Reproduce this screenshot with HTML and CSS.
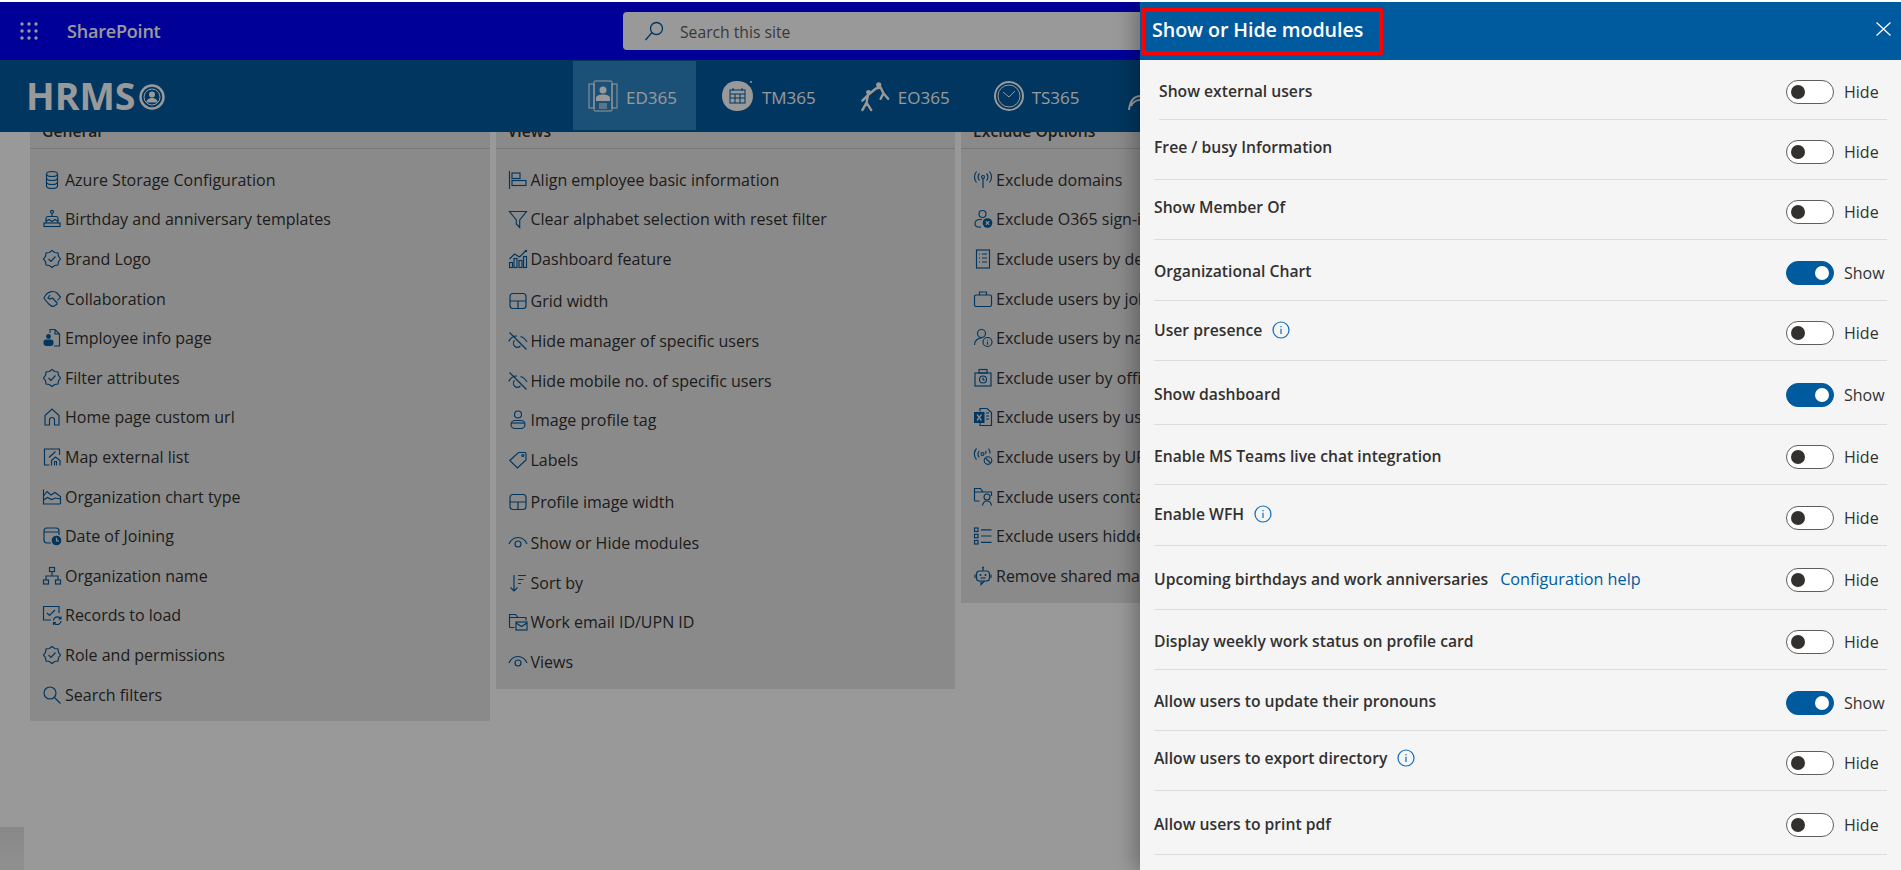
FILE: index.html
```html
<!DOCTYPE html>
<html lang="en">
<head>
<meta charset="utf-8">
<title>Show or Hide modules</title>
<link rel="stylesheet" href="styles.css">
</head>
<body>
<svg class="defs" aria-hidden="true">
  <symbol id="i-db" viewBox="0 0 20 20"><ellipse cx="10" cy="4" rx="5.5" ry="2.5"/><path d="M4.5 4v12c0 1.4 2.5 2.5 5.5 2.5s5.500-1.100 5.500-2.500V4M4.500 8c0 1.400 2.500 2.500 5.500 2.500s5.500-1.100 5.500-2.500M4.500 12c0 1.400 2.500 2.500 5.500 2.500s5.500-1.100 5.500-2.500"/></symbol>
  <symbol id="i-cake" viewBox="0 0 20 20"><circle cx="10" cy="2.800" r="1.500"/><path d="M10 4.500v2.500M4 14V9.500a2 2 0 0 1 2-2h8a2 2 0 0 1 2 2V14M4 12.500l3-2 3 2 3-2 3 2"/><rect x="2" y="14" width="16" height="3.500"/></symbol>
  <symbol id="i-badge" viewBox="0 0 20 20"><polygon points="10,1.500 12.700,3.500 16,4 16.500,7.300 18.500,10 16.500,12.700 16,16 12.700,16.500 10,18.500 7.300,16.500 4,16 3.500,12.700 1.500,10 3.500,7.300 4,4 7.300,3.500"/><path d="M6.500 10l2.500 2.500 4.500-5"/></symbol>
  <symbol id="i-hands" viewBox="0 0 20 20"><path d="M3 7c2-4 8-6 12-3l3.500 4-3 3.500M1.800 9l5 6c1 1 2.500 2.500 4.500 2.500l4-2.500M8 6L6 9l2 1 2.500-1 5 5.500M1.800 9L3 7"/></symbol>
  <symbol id="i-empdoc" viewBox="0 0 20 20"><path d="M8 5V1.500h5l4.500 4.500v12H12M13 1.500V6h4.500"/><circle class="f" cx="6.500" cy="8.500" r="2.400"/><path class="f" d="M1.500 14a2.500 2.500 0 0 1 2.500-2.500h5a2.500 2.500 0 0 1 2.500 2.500v1a3 3 0 0 1-3 3h-4a3 3 0 0 1-3-3z"/></symbol>
  <symbol id="i-home" viewBox="0 0 20 20"><path d="M3 18V8.500L10 2l7 6.500V18h-4.500v-5a2.500 2.500 0 0 0-5 0v5z"/></symbol>
  <symbol id="i-mapext" viewBox="0 0 20 20"><path d="M17.500 8V2H2.500v16h5M9.500 18.500v-5l4-3.500 4.500 3.500v5M12.500 18.500v-4h2v4M7 10.500l6.500-6"/></symbol>
  <symbol id="i-area" viewBox="0 0 20 20"><path d="M1.500 2.500v14.500h17M1.500 9L5 4.500l4 3.500 4-2.500 5.500 4V17M1.500 13l4-2.500 4 2 4-1.500 5 1"/></symbol>
  <symbol id="i-calclock" viewBox="0 0 20 20"><path d="M9 17H5a3 3 0 0 1-3-3V5a3 3 0 0 1 3-3h9a3 3 0 0 1 3 3v4M2 6h15"/><circle class="f" cx="14.500" cy="14.500" r="4.800"/><path class="w" d="M14.500 11.800v3h2.500"/></symbol>
  <symbol id="i-org" viewBox="0 0 20 20"><rect x="7.500" y="1.500" width="5" height="4"/><rect x="1.500" y="14" width="5" height="4"/><rect x="13.500" y="14" width="5" height="4"/><path d="M10 5.500v4.500M4 14v-4h12v4"/></symbol>
  <symbol id="i-checksync" viewBox="0 0 20 20"><path d="M17 8V1.500H1.500V15H9M5 8l2.500 2.500L13 5M11.500 15.500a3.800 3.800 0 0 1 6.500-2.500l1 1M19 16a3.800 3.800 0 0 1-6.500 2.500l-1-1M19 11.500V14h-2.500M11.500 20v-2.500H14"/></symbol>
  <symbol id="i-search" viewBox="0 0 20 20"><circle cx="8" cy="8" r="6"/><path d="M12.500 12.500l6 6"/></symbol>
  <symbol id="i-align" viewBox="0 0 20 20"><path d="M1.500 1v18"/><rect x="4" y="3" width="8" height="5.500"/><rect x="4" y="10.500" width="14" height="5"/></symbol>
  <symbol id="i-funnel" viewBox="0 0 20 20"><path d="M1.500 2.500h17l-6.800 8.500v7.500L8.300 15v-4z"/></symbol>
  <symbol id="i-chart" viewBox="0 0 20 20"><rect x="1.500" y="13.500" width="3" height="5"/><rect x="6" y="9.500" width="3" height="9"/><rect x="11" y="11.500" width="3" height="7"/><rect x="15.500" y="7.500" width="3" height="11"/><path d="M1.500 10L6.500 5l5 3 6-6"/><circle class="f" cx="18" cy="2" r="1.200"/></symbol>
  <symbol id="i-layout" viewBox="0 0 20 20"><rect x="2" y="2.500" width="16" height="15" rx="3"/><path d="M2 10h16M10 10v7.500"/></symbol>
  <symbol id="i-eyeoff" viewBox="0 0 20 20"><path d="M1.500 1.500l17 17M.8 10.500C2.500 6.500 5.500 5 9 5M12.500 5.500c2.800.8 5 2.800 6.500 5.500M6.500 9.500a4 4 0 0 0 6 5.500"/></symbol>
  <symbol id="i-stand" viewBox="0 0 20 20"><circle cx="10" cy="4.500" r="3.500"/><rect x="3" y="10.500" width="14" height="8" rx="4"/><path d="M3 13h14"/></symbol>
  <symbol id="i-tag" viewBox="0 0 20 20"><path d="M1.800 10.500L10.500 2.500H17a1 1 0 0 1 1 1v6.500l-8.500 8z"/><circle cx="14.800" cy="5.500" r="1"/></symbol>
  <symbol id="i-eye" viewBox="0 0 20 20"><path d="M1 11C3 6.500 6 4.500 10 4.500s7 2 9 6.500"/><circle cx="10" cy="11" r="3"/></symbol>
  <symbol id="i-sort" viewBox="0 0 20 20"><path d="M6 2v16M2.500 14.500L6 18l3.500-3.500M10 2.500h8M10 6.500h5.500M10 10.500h3"/></symbol>
  <symbol id="i-foldermail" viewBox="0 0 20 20"><path d="M1.500 15.500V2.500h6L10 5.500h8v3M1.500 5.500h8M1.500 15.500h5"/><rect x="8" y="10" width="11" height="8"/><path d="M8 11l5.500 3.500L19 11"/></symbol>
  <symbol id="i-antenna" viewBox="0 0 20 20"><circle cx="10" cy="7" r="1.500"/><path d="M10 8.500V18M6.500 3.500a5 5 0 0 0 0 7M13.500 3.500a5 5 0 0 1 0 7M3.500 1.500a8.500 8.500 0 0 0 0 11M16.500 1.500a8.500 8.500 0 0 1 0 11"/></symbol>
  <symbol id="i-personx" viewBox="0 0 20 20"><circle cx="9.500" cy="5" r="3.500"/><path d="M9 10.500H7c-3 0-5 1.500-5 4.500 0 2 2 3.500 6 3"/><circle class="f" cx="14.500" cy="14" r="4.800"/><path class="w" d="M12.800 12.300l3.400 3.400M16.200 12.300l-3.400 3.400"/></symbol>
  <symbol id="i-doclist" viewBox="0 0 20 20"><rect x="3.500" y="1" width="13" height="18"/><path d="M6 5h1M9 5h5M6 9h1M9 9h5M6 13h1M9 13h5"/></symbol>
  <symbol id="i-brief" viewBox="0 0 20 20"><rect x="1.500" y="6" width="17" height="11.500" rx="1.500"/><path d="M6.500 6V3h7v3"/></symbol>
  <symbol id="i-personinfo" viewBox="0 0 20 20"><circle cx="8.500" cy="5.500" r="4"/><path d="M1.500 17c0-4 3-7 7-7"/><circle cx="14.500" cy="14" r="4.500"/><path d="M14.500 11.800v.8M14.500 13.800v3"/></symbol>
  <symbol id="i-safe" viewBox="0 0 20 20"><rect x="2" y="5" width="16" height="13"/><rect x="6" y="1.500" width="8" height="3.500"/><circle cx="10" cy="11.500" r="3.500"/><path d="M10 9.500v2l1.500 1"/></symbol>
  <symbol id="i-excel" viewBox="0 0 20 20"><path d="M7 4.500v-3h7l4.500 4v13H7v-3M13 9h3M13 12h3M13 6h3"/><rect class="f" x="1" y="5" width="10.500" height="11"/><path class="w" d="M4 7.500l4.500 6M8.500 7.500l-4.500 6"/></symbol>
  <symbol id="i-antblock" viewBox="0 0 20 20"><circle cx="9.500" cy="7" r="1.500"/><path d="M6.300 3.800a4.500 4.500 0 0 0 0 6.500M12.700 3.800a4.500 4.500 0 0 1 0 3M3.500 1.500a8 8 0 0 0 0 11M15.500 1.500a8 8 0 0 1 1.500 5"/><circle cx="15" cy="13.500" r="3.800"/><path d="M12.500 11l5 5"/></symbol>
  <symbol id="i-folderperson" viewBox="0 0 20 20"><path d="M1.500 14V1.500h6L10 5h8.500v4M1.500 5h8M1.500 14h5"/><circle cx="14" cy="10" r="3"/><path d="M9.500 18.500c.5-3 2-4.500 4.500-4.500s4 1.500 4.500 4.500"/></symbol>
  <symbol id="i-checklist" viewBox="0 0 20 20"><rect x="1.500" y="2" width="3.500" height="3.500"/><rect x="1.500" y="8.300" width="3.500" height="3.500"/><rect x="1.500" y="14.500" width="3.500" height="3.500"/><path d="M8 3.800h10.500M8 10h10.500M8 16.300h10.500"/></symbol>
  <symbol id="i-bot" viewBox="0 0 20 20"><circle class="f" cx="10" cy="1.500" r="1"/><path d="M10 2v3M2 8.500v3.500M18 8.500v3.500M8 15v3.500l3.500-3.500"/><rect x="3.500" y="5" width="13" height="10" rx="3"/><circle class="f" cx="7.500" cy="9" r="1"/><circle class="f" cx="12.500" cy="9" r="1"/><path d="M7.500 12h5"/></symbol>
  <symbol id="i-info" viewBox="0 0 18 18"><circle cx="9" cy="9" r="8"/><path d="M9 5v1.200M9 7.800V13"/></symbol>
</svg>

<div class="page">
  <header class="header">
    <div class="topbar">
      <svg class="waffle" viewBox="0 0 18 18"><circle cx="2" cy="2" r="1.700"/><circle cx="9" cy="2" r="1.700"/><circle cx="16" cy="2" r="1.700"/><circle cx="2" cy="9" r="1.700"/><circle cx="9" cy="9" r="1.700"/><circle cx="16" cy="9" r="1.700"/><circle cx="2" cy="16" r="1.700"/><circle cx="9" cy="16" r="1.700"/><circle cx="16" cy="16" r="1.700"/></svg>
      <span class="brand">SharePoint</span>
      <div class="searchbox">
        <svg class="searchicon" viewBox="0 0 20 20"><circle cx="12.500" cy="7.500" r="6"/><path d="M8 11.500L1.500 19"/></svg>
        <span class="searchtext">Search this site</span>
      </div>
    </div>
    <div class="subbar">
      <div class="logo">
        <span class="logotext">HRMS</span>
        <svg class="logoicon" viewBox="0 0 26 26"><circle class="ring" cx="13" cy="13" r="11.500"/><circle class="ring2" cx="13" cy="13" r="8"/><circle class="solid" cx="13" cy="10.500" r="3"/><path class="solid" d="M7.500 18.500c0-2.800 2.500-4.500 5.500-4.500s5.500 1.700 5.500 4.500z"/></svg>
      </div>
      <nav class="nav">
        <a class="tile active">
          <svg class="navicon" viewBox="0 0 30 32"><rect x="6" y="1" width="18" height="30" rx="1"/><rect x="1" y="4" width="5" height="24"/><rect x="24" y="4" width="5" height="24"/><circle class="solid" cx="15" cy="10" r="3.500"/><path class="solid" d="M8 21v-3c0-2 3-3.500 7-3.500s7 1.500 7 3.500v3z"/><path class="thin" d="M11 24h8M11 26h8M11 28h8"/></svg>
          <span>ED365</span>
        </a>
        <a class="tile">
          <svg class="navicon wide" viewBox="0 0 33 32"><path class="solid" d="M16 1c9 0 16 6 16 15s-7 15-16 15C8 31 1 25 1 16S7 1 16 1z"/><circle class="solid" cx="30" cy="2" r="1"/><g class="cal"><rect x="9" y="10" width="15" height="13"/><path d="M9 14h15M9 18h15M14 14v9M19 14v9M12 8v3M21 8v3"/></g></svg>
          <span>TM365</span>
        </a>
        <a class="tile">
          <svg class="navicon" viewBox="0 0 32 32"><circle class="solid" cx="9" cy="12" r="2.500"/><circle class="solid" cx="20" cy="4" r="2.800"/><path class="limb" d="M8.500 15L7 23M7 23l-4.500 8M7 23l5 8M8.500 15l-6 6M8.500 15L17 8M17 8l5-1M22 7l3 6M25 13l5 6M25 13l-3 6"/></svg>
          <span>EO365</span>
        </a>
        <a class="tile">
          <svg class="navicon" viewBox="0 0 30 32"><circle class="clock" cx="15" cy="16" r="14"/><circle cx="15" cy="16" r="11"/><path d="M9 12l6 5 6-6"/></svg>
          <span>TS365</span>
        </a>
        <a class="tile tail">
          <svg class="navicon" viewBox="0 0 30 32"><path class="clock" d="M2 30C3 20 8 16 14 16M4 26c2-4 5-6 9-6"/></svg>
        </a>
      </nav>
    </div>
  </header>

  <main class="cards">
    <section class="card">
      <h2 class="cardtitle">General</h2>
      <ul class="list">
        <li class="item"><svg class="ic"><use href="#i-db"/></svg><span>Azure Storage Configuration</span></li>
        <li class="item"><svg class="ic"><use href="#i-cake"/></svg><span>Birthday and anniversary templates</span></li>
        <li class="item"><svg class="ic"><use href="#i-badge"/></svg><span>Brand Logo</span></li>
        <li class="item"><svg class="ic"><use href="#i-hands"/></svg><span>Collaboration</span></li>
        <li class="item"><svg class="ic"><use href="#i-empdoc"/></svg><span>Employee info page</span></li>
        <li class="item"><svg class="ic"><use href="#i-badge"/></svg><span>Filter attributes</span></li>
        <li class="item"><svg class="ic"><use href="#i-home"/></svg><span>Home page custom url</span></li>
        <li class="item"><svg class="ic"><use href="#i-mapext"/></svg><span>Map external list</span></li>
        <li class="item"><svg class="ic"><use href="#i-area"/></svg><span>Organization chart type</span></li>
        <li class="item"><svg class="ic"><use href="#i-calclock"/></svg><span>Date of Joining</span></li>
        <li class="item"><svg class="ic"><use href="#i-org"/></svg><span>Organization name</span></li>
        <li class="item"><svg class="ic"><use href="#i-checksync"/></svg><span>Records to load</span></li>
        <li class="item"><svg class="ic"><use href="#i-badge"/></svg><span>Role and permissions</span></li>
        <li class="item"><svg class="ic"><use href="#i-search"/></svg><span>Search filters</span></li>
      </ul>
    </section>
    <section class="card">
      <h2 class="cardtitle">Views</h2>
      <ul class="list">
        <li class="item"><svg class="ic"><use href="#i-align"/></svg><span>Align employee basic information</span></li>
        <li class="item"><svg class="ic"><use href="#i-funnel"/></svg><span>Clear alphabet selection with reset filter</span></li>
        <li class="item"><svg class="ic"><use href="#i-chart"/></svg><span>Dashboard feature</span></li>
        <li class="item push2"><svg class="ic"><use href="#i-layout"/></svg><span>Grid width</span></li>
        <li class="item push1"><svg class="ic"><use href="#i-eyeoff"/></svg><span>Hide manager of specific users</span></li>
        <li class="item"><svg class="ic"><use href="#i-eyeoff"/></svg><span>Hide mobile no. of specific users</span></li>
        <li class="item"><svg class="ic"><use href="#i-stand"/></svg><span>Image profile tag</span></li>
        <li class="item"><svg class="ic"><use href="#i-tag"/></svg><span>Labels</span></li>
        <li class="item push2"><svg class="ic"><use href="#i-layout"/></svg><span>Profile image width</span></li>
        <li class="item push2"><svg class="ic"><use href="#i-eye"/></svg><span>Show or Hide modules</span></li>
        <li class="item"><svg class="ic"><use href="#i-sort"/></svg><span>Sort by</span></li>
        <li class="item"><svg class="ic"><use href="#i-foldermail"/></svg><span>Work email ID/UPN ID</span></li>
        <li class="item"><svg class="ic"><use href="#i-eye"/></svg><span>Views</span></li>
      </ul>
    </section>
    <section class="card">
      <h2 class="cardtitle">Exclude Options</h2>
      <ul class="list">
        <li class="item"><svg class="ic"><use href="#i-antenna"/></svg><span>Exclude domains</span></li>
        <li class="item"><svg class="ic"><use href="#i-personx"/></svg><span>Exclude O365 sign-in blocked users</span></li>
        <li class="item"><svg class="ic"><use href="#i-doclist"/></svg><span>Exclude users by department</span></li>
        <li class="item"><svg class="ic"><use href="#i-brief"/></svg><span>Exclude users by job title</span></li>
        <li class="item"><svg class="ic"><use href="#i-personinfo"/></svg><span>Exclude users by name</span></li>
        <li class="item"><svg class="ic"><use href="#i-safe"/></svg><span>Exclude user by office location</span></li>
        <li class="item"><svg class="ic"><use href="#i-excel"/></svg><span>Exclude users by using Excel</span></li>
        <li class="item"><svg class="ic"><use href="#i-antblock"/></svg><span>Exclude users by UPN</span></li>
        <li class="item"><svg class="ic"><use href="#i-folderperson"/></svg><span>Exclude users containing</span></li>
        <li class="item"><svg class="ic"><use href="#i-checklist"/></svg><span>Exclude users hidden</span></li>
        <li class="item"><svg class="ic"><use href="#i-bot"/></svg><span>Remove shared mailboxes</span></li>
      </ul>
    </section>
  </main>

  <div class="cornerbox"></div>
  <div class="overlay"></div>

  <aside class="panel">
    <div class="panelhead">
      <h1 class="paneltitle">Show or Hide modules</h1>
      <svg class="closeicon" viewBox="0 0 15 14"><path d="M.5.5l14 13M14.500.5L.5 13.500"/></svg>
      <div class="annotation"></div>
    </div>
    <div class="rows">
      <div class="row first"><span class="label">Show external users</span><div class="switch"><span class="toggle"><i></i></span><span class="state">Hide</span></div></div>
      <div class="row"><span class="label lift6">Free / busy Information</span><div class="switch"><span class="toggle"><i></i></span><span class="state">Hide</span></div></div>
      <div class="row"><span class="label lift6">Show Member Of</span><div class="switch"><span class="toggle"><i></i></span><span class="state">Hide</span></div></div>
      <div class="row mid"><span class="label">Organizational Chart</span><div class="switch"><span class="toggle on"><i></i></span><span class="state">Show</span></div></div>
      <div class="row"><span class="label lift4">User presence<svg class="info"><use href="#i-info"/></svg></span><div class="switch"><span class="toggle"><i></i></span><span class="state">Hide</span></div></div>
      <div class="row tall"><span class="label">Show dashboard</span><div class="switch"><span class="toggle on"><i></i></span><span class="state">Show</span></div></div>
      <div class="row"><span class="label">Enable MS Teams live chat integration</span><div class="switch"><span class="toggle"><i></i></span><span class="state">Hide</span></div></div>
      <div class="row mid"><span class="label lift4">Enable WFH<svg class="info"><use href="#i-info"/></svg></span><div class="switch"><span class="toggle"><i></i></span><span class="state">Hide</span></div></div>
      <div class="row tall"><span class="label">Upcoming birthdays and work anniversaries<a class="help">Configuration help</a></span><div class="switch"><span class="toggle"><i></i></span><span class="state">Hide</span></div></div>
      <div class="row"><span class="label">Display weekly work status on profile card</span><div class="switch"><span class="toggle"><i></i></span><span class="state">Hide</span></div></div>
      <div class="row mid"><span class="label">Allow users to update their pronouns</span><div class="switch"><span class="toggle on"><i></i></span><span class="state">Show</span></div></div>
      <div class="row"><span class="label lift6">Allow users to export directory<svg class="info"><use href="#i-info"/></svg></span><div class="switch"><span class="toggle"><i></i></span><span class="state">Hide</span></div></div>
      <div class="row tall"><span class="label">Allow users to print pdf</span><div class="switch"><span class="toggle"><i></i></span><span class="state">Hide</span></div></div>
    </div>
  </aside>
</div>
</body>
</html>
```
FILE: styles.css
```css
* { box-sizing: border-box; }
html, body { margin: 0; height: 100%; overflow: hidden; background: #fff; }
body { font-family: "Open Sans", "Noto Sans", sans-serif; color: #323130; }
.defs { display: none; }
.page { position: relative; height: 868px; margin-top: 2px; overflow: hidden; }

/* Site header */
.header { position: relative; z-index: 1; }
.topbar { display: flex; align-items: center; height: 58px; padding-left: 20px; background: #0000ff; }
.waffle { width: 18px; height: 18px; fill: #fff; flex: none; }
.brand { width: 556px; margin-left: 29px; font-size: 18px; font-weight: 600; color: #fff; letter-spacing: -.2px; }
.searchbox { display: flex; align-items: center; width: 655px; height: 38px; padding-left: 21px; background: #fff; border-radius: 4px; }
.searchicon { width: 20px; height: 20px; fill: none; stroke: #005a9e; stroke-width: 1.300; flex: none; }
.searchtext { margin-left: 16px; margin-top: 2px; font-size: 15.700px; color: #605e5c; }
.subbar { display: flex; align-items: center; height: 72px; padding-left: 26px; background: #005a9e; }
.logo { display: flex; align-items: center; width: 547px; flex: none; }
.logotext { font-size: 37.500px; font-weight: 700; color: #fff; line-height: 1; }
.logoicon { width: 26px; height: 26px; margin-left: 4px; margin-top: 2px; }
.ring, .ring2 { fill: none; stroke: #fff; }
.ring { stroke-width: 2.500; }
.ring2 { stroke-width: 1; }
.solid { fill: #fff; stroke: none; }
.nav { display: flex; gap: 10px; height: 69px; margin-bottom: 1px; }
.tile { display: flex; align-items: center; gap: 8px; padding: 0 19px 0 15px; font-size: 17px; color: #fff; white-space: nowrap; }
.tile.active { background: #2f88c6; }
.tile span { margin-top: 3px; }
.navicon { width: 30px; height: 32px; fill: none; stroke: #fff; stroke-width: 1; flex: none; }
.navicon.wide { width: 33px; }
.cal { fill: none; stroke: #005a9e; stroke-width: 1; }
.limb { stroke-width: 2.600; stroke-linecap: round; }
.clock { stroke-width: 2; }
.tail { padding-left: 19px; }

/* Settings cards */
.cards { display: flex; align-items: flex-start; gap: 6px; margin-top: -20px; padding-left: 30px; }
.card { flex: none; width: 459.500px; padding-bottom: 7px; background: #e6e6e6; }
.cardtitle { height: 37px; margin: 0; padding-left: 12px; font-size: 15.700px; font-weight: 600; line-height: 38px; border-bottom: 1px solid #c8c8c8; }
.list { margin: 0; padding: 11px 0 0 12px; list-style: none; }
.item { display: flex; align-items: center; gap: 3px; height: 39.600px; font-size: 16px; white-space: nowrap; }
.push1 { margin-top: 1px; }
.push2 { margin-top: 2px; }
.ic { width: 20px; height: 20px; fill: none; stroke: #005a9e; stroke-width: 1.150; flex: none; }
.f { fill: #005a9e; stroke: none; }
.w { fill: none; stroke: #e6e6e6; stroke-width: 1.300; }

/* Screen overlay and corner scrap */
.cornerbox { position: absolute; left: 0; bottom: 0; width: 24px; height: 43px; background: linear-gradient(#e4e4e4, #efefef); }
.overlay { position: absolute; inset: 0; z-index: 2; background: rgba(0, 0, 0, .4); }

/* Side panel */
.panel { position: absolute; top: 0; right: 0; bottom: 0; z-index: 3; width: 761px; background: #f5f5f5; box-shadow: -6px 0 18px rgba(0, 0, 0, .28); }
.panelhead { position: relative; display: flex; align-items: center; justify-content: space-between; height: 58px; padding: 0 10px 4px 12px; background: #005a9e; color: #fff; }
.paneltitle { margin: 0; font-size: 19.700px; font-weight: 600; letter-spacing: -.1px; }
.closeicon { width: 15px; height: 14px; margin-top: 0; fill: none; stroke: #fff; stroke-width: 1.200; }
.annotation { position: absolute; left: 1px; top: 6px; width: 242px; height: 47px; border: 4px solid #f00; border-radius: 2px; }
.rows { display: flex; flex-direction: column; padding: 0 14px; }
.row { display: flex; align-items: center; justify-content: space-between; flex: none; height: 60px; padding-top: 5px; border-bottom: 1px solid #dcdcdc; }
.row.first { margin-left: 5px; }
.row.mid { height: 61px; }
.row.tall { height: 64px; }
.label { display: flex; align-items: center; margin-bottom: 3px; font-size: 15.700px; font-weight: 600; }
.lift4 { margin-bottom: 7px; }
.lift6 { margin-bottom: 11px; }
.info { width: 18px; height: 18px; margin-left: 10px; fill: none; stroke: #0f6cbd; stroke-width: 1.200; }
.help { margin-left: 12px; font-size: 16.200px; font-weight: 400; color: #005a9e; }
.switch { display: flex; align-items: center; gap: 10px; }
.toggle { display: flex; align-items: center; width: 48px; height: 24px; padding: 0 4px; background: #fff; border: 1px solid #605e5c; border-radius: 12px; }
.toggle i { display: block; width: 14px; height: 14px; border-radius: 50%; background: #323130; }
.toggle.on { justify-content: flex-end; background: #005a9e; border-color: #005a9e; }
.toggle.on i { background: #fff; }
.state { width: 43px; font-size: 16px; }
```
